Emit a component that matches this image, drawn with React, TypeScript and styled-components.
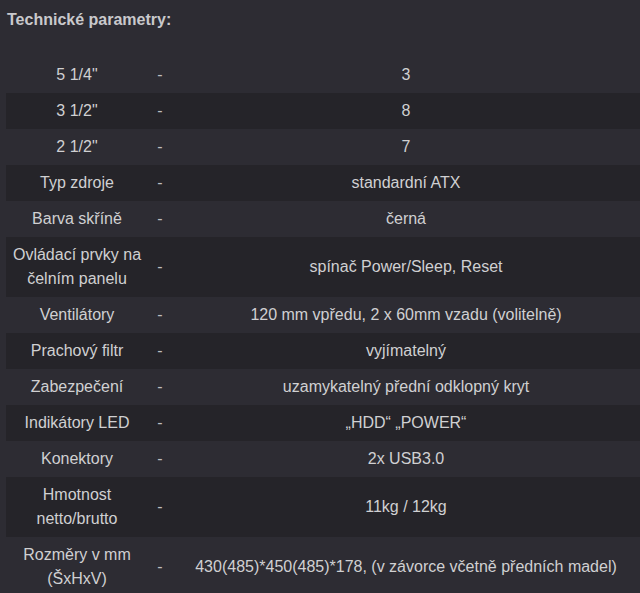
import React from "react";
import styled, { createGlobalStyle } from "styled-components";

const GlobalStyle = createGlobalStyle`
  html, body {
    margin: 0;
    padding: 0;
    background: #2d2c33;
  }
  body {
    font-family: "Liberation Sans", Arial, sans-serif;
    color: #d0d0d2;
  }
`;

const Page = styled.div`
  padding: 9px 0 0 6px;
  min-height: 593px;
  box-sizing: border-box;
`;

const Title = styled.h3`
  margin: 0 0 0 1px;
  font-size: 16px;
  line-height: 22px;
  font-weight: bold;
  color: #c9c9cc;
`;

const Table = styled.table`
  margin-top: 26px;
  width: 634px;
  border-collapse: collapse;
  table-layout: fixed;
  font-size: 16px;
  line-height: 24px;
`;

const Row = styled.tr<{ $dark: boolean }>`
  background: ${(p) => (p.$dark ? "#252429" : "transparent")};
`;

const Cell = styled.td`
  padding: 6px 4px;
  text-align: center;
  vertical-align: middle;
`;

const DashCell = styled(Cell)`
  padding: 6px 0;
  color: #bdbdc0;
`;

const rows: [string, string][] = [
  ["5 1/4\"", "3"],
  ["3 1/2\"", "8"],
  ["2 1/2\"", "7"],
  ["Typ zdroje", "standardní ATX"],
  ["Barva skříně", "černá"],
  ["Ovládací prvky na čelním panelu", "spínač Power/Sleep, Reset"],
  ["Ventilátory", "120 mm vpředu, 2 x 60mm vzadu (volitelně)"],
  ["Prachový filtr", "vyjímatelný"],
  ["Zabezpečení", "uzamykatelný přední odklopný kryt"],
  ["Indikátory LED", "„HDD“ „POWER“"],
  ["Konektory", "2x USB3.0"],
  ["Hmotnost netto/brutto", "11kg / 12kg"],
  ["Rozměry v mm (ŠxHxV)", "430(485)*450(485)*178, (v závorce včetně předních madel)"],
];

export default function App() {
  return (
    <>
      <GlobalStyle />
      <Page>
        <Title>Technické parametry:</Title>
        <Table>
          <colgroup>
            <col style={{ width: 142 }} />
            <col style={{ width: 24 }} />
            <col />
          </colgroup>
          <tbody>
            {rows.map(([k, v], i) => (
              <Row key={k} $dark={i % 2 === 1}>
                <Cell>{k}</Cell>
                <DashCell>-</DashCell>
                <Cell>{v}</Cell>
              </Row>
            ))}
          </tbody>
        </Table>
      </Page>
    </>
  );
}
